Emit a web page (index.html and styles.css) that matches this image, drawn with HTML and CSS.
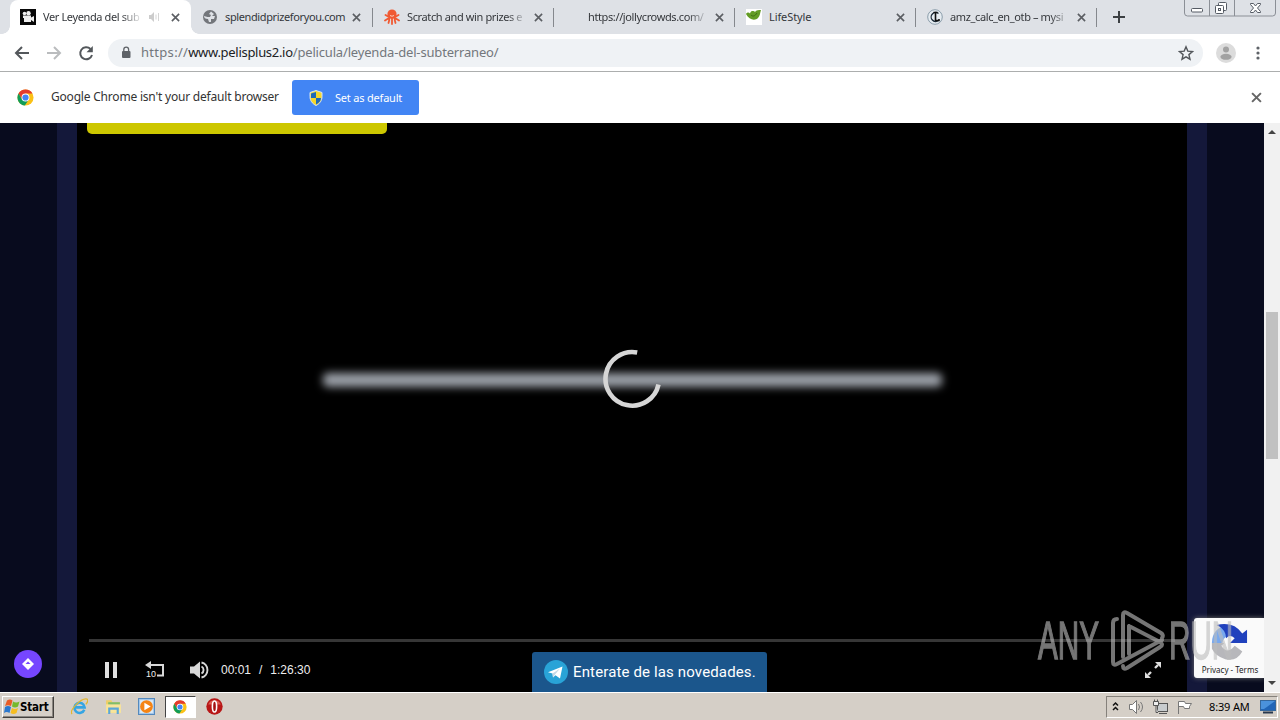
FILE: index.html
```
<!DOCTYPE html>
<html lang="es">
<head>
    <meta charset="UTF-8">
    <meta name="viewport" content="width=device-width, initial-scale=1.0">
    <title>Ver Leyenda del subterraneo</title>
    <link rel="stylesheet" href="styles.css">
</head>
<body>
    <svg width="0" height="0" class="defs">
        <symbol id="close" viewBox="0 0 10 10">
            <path d="M1 1l8 8M9 1l-8 8" fill="none" stroke="currentColor" stroke-width="1.8"/>
        </symbol>
        <symbol id="chrome" viewBox="0 0 18 18">
            <circle cx="9" cy="9" r="8.5" fill="#fbc116"/>
            <path d="M1.6 4.8A8.5 8.5 0 0 1 16.4 4.8H9L5.4 11z" fill="#e33b2e"/>
            <path d="M1.6 4.8A8.5 8.5 0 0 0 8.3 17.5L12.5 11 9 13 5.4 11z" fill="#109d58"/>
            <circle cx="9" cy="9" r="4.2" fill="#fff"/>
            <circle cx="9" cy="9" r="3.3" fill="#4285f4"/>
        </symbol>
    </svg>

    <div class="tab-strip">
        <div class="tab active">
            <svg class="favicon" viewBox="0 0 16 16">
                <rect width="16" height="16" fill="#080808"/>
                <circle cx="4.500" cy="4.500" r="1.800" fill="#eee"/><circle cx="8.500" cy="4.200" r="2.200" fill="#eee"/>
                <path d="M3 6.500h8v2l3-1.500v6l-3-2v2H4V9H3z" fill="#eee"/>
            </svg>
            <span class="tab-title">Ver Leyenda del sub</span>
            <svg class="audio" viewBox="0 0 12 10">
                <path d="M0 3h2l3-3v10L2 7H0z" fill="#ccc"/>
                <path d="M7 2.500v5M9.500 1v8" stroke="#d5d5d5" fill="none"/>
            </svg>
            <svg class="tab-close"><use href="#close"/></svg>
        </div>
        <div class="tab">
            <svg class="favicon" viewBox="0 0 16 16">
                <circle cx="8" cy="8" r="7" fill="#73767b"/>
                <path d="M9 2.500l-2 2.500 2 1-1 2H5.500L2 7q0 3 4 3l1 3 2 0 0-3 3 0 1-3-3 0 2-2z" fill="#dee1e6"/>
            </svg>
            <span class="tab-title full">splendidprizeforyou.com</span>
            <svg class="tab-close"><use href="#close"/></svg>
        </div>
        <div class="tab wide">
            <svg class="favicon" viewBox="0 0 16 16">
                <circle cx="8" cy="5" r="4.600" fill="#f05a33"/>
                <path d="M8 8v7M6 8l-1.500 6M10 8l1.500 6M5 8L1.500 6M11 8l3.500-2M5 9l-4 2.500M11 9l4 2.500" stroke="#f05a33" stroke-width="1.800" stroke-linecap="round"/>
                <path d="M6 6.500q2 1.500 4 0M6 11l1-1M10 11l-1-1" stroke="#fbd0c0" fill="none"/>
            </svg>
            <span class="tab-title">Scratch and win prizes e</span>
            <svg class="tab-close"><use href="#close"/></svg>
        </div>
        <div class="tab">
            <span class="favicon"></span>
            <span class="tab-title">https://jollycrowds.com/</span>
            <svg class="tab-close"><use href="#close"/></svg>
        </div>
        <div class="tab">
            <svg class="favicon" viewBox="0 0 16 16">
                <rect width="16" height="16" fill="#fff"/>
                <path d="M0 5c1-2 3-2 4-.5C5 1 8 2 9 3c1-2 4-2 6-2-1 3-1 6-3 8-3 3-9 2-12-4z" fill="#639c25"/>
                <path d="M5 6c2 2 4 1 6-2" stroke="#3c6f12" fill="none"/>
            </svg>
            <span class="tab-title full loose">LifeStyle</span>
            <svg class="tab-close"><use href="#close"/></svg>
        </div>
        <div class="tab">
            <svg class="favicon" viewBox="0 0 16 16">
                <circle cx="8" cy="8" r="7.300" fill="#e6ecf1" stroke="#8b9daa"/>
                <path d="M11.500 4.500A4.500 4.500 0 1 0 11.500 11.500" fill="none" stroke="#1c2b38" stroke-width="1.300"/>
                <path d="M6.500 3.500h4M8.500 3.500v8h3.500v-1.500" fill="none" stroke="#111" stroke-width="1.600"/>
            </svg>
            <span class="tab-title">amz_calc_en_otb – mysi</span>
            <svg class="tab-close"><use href="#close"/></svg>
        </div>
        <svg class="new-tab" viewBox="0 0 12 12"><path d="M6 0v12M0 6h12" stroke="#3c4043" stroke-width="2"/></svg>
        <svg class="window-buttons" viewBox="0 0 94 18">
            <path d="M1.500 0v13q0 3 3 3h85q3 0 3-3V0M26.500 0v16M51.500 0v16" fill="none" stroke="#8b8f96"/>
            <g fill="#fff" stroke="#555b64">
                <rect x="8.500" y="8.500" width="11" height="3.500" rx="1"/>
                <rect x="35.500" y="2.500" width="8" height="8" rx="1"/>
                <rect x="32.500" y="5.500" width="8" height="8" rx="1"/>
                <rect x="35.500" y="8.500" width="2" height="2"/>
                <path d="M67.500 3.500h3l2 2.500 2-2.500h3v1l-3 3.500 3 3.500v1h-3l-2-2.500-2 2.500h-3v-1l3-3.500-3-3.500z"/>
            </g>
        </svg>
    </div>

    <div class="toolbar">
        <svg class="nav-icons" viewBox="0 0 100 20">
            <path d="M21 10H8.500M14 4l-6 6 6 6" fill="none" stroke="#53575b" stroke-width="2"/>
            <path d="M39 10h13M46 4l6 6-6 6" fill="none" stroke="#babcbe" stroke-width="2"/>
            <path d="M82.500 6A6 6 0 1 0 84 12" fill="none" stroke="#53575b" stroke-width="2"/>
            <path d="M84.800 3v6.300h-6.300z" fill="#53575b"/>
        </svg>
        <div class="omnibox">
            <svg class="lock" viewBox="0 0 10 13">
                <rect x="1" y="5" width="8.500" height="7" rx="1" fill="#5f6368"/>
                <path d="M2.800 5V3.500a2.400 2.400 0 0 1 4.800 0V5" fill="none" stroke="#5f6368" stroke-width="1.300"/>
            </svg>
            <span class="url"><span class="scheme">https://</span><b>www.pelisplus2.io</b>/pelicula/leyenda-del-subterraneo/</span>
            <svg class="star" viewBox="0 0 16 16">
                <path d="M8 1.800l1.800 4.300 4.700.4-3.600 3.100 1.100 4.600L8 11.800l-4 2.400 1.100-4.600L1.500 6.500l4.700-.4z" fill="none" stroke="#53575b" stroke-width="1.400"/>
            </svg>
        </div>
        <svg class="avatar" viewBox="0 0 20 20">
            <circle cx="10" cy="10" r="10" fill="#dcdcdc"/>
            <circle cx="10" cy="6.500" r="3" fill="#a2a2a2"/>
            <ellipse cx="10" cy="13.800" rx="5.600" ry="3" fill="#a2a2a2"/>
        </svg>
        <svg class="menu" viewBox="0 0 4 14">
            <circle cx="2" cy="2" r="1.600"/><circle cx="2" cy="7" r="1.600"/><circle cx="2" cy="12" r="1.600"/>
        </svg>
    </div>

    <div class="infobar">
        <svg class="chrome-icon"><use href="#chrome"/></svg>
        <span class="info-text">Google Chrome isn't your default browser</span>
        <button class="default-btn">
            <svg viewBox="0 0 14 16">
                <path d="M7 .5l6 2v4c0 4-2 7-6 9-4-2-6-5-6-9v-4z" fill="#f5d72b" stroke="#d9e6f2"/>
                <path d="M7 2v6H2V3.500zM7 8h5c0 3-2 5-5 6.500z" fill="#1e69b8"/>
            </svg>
            <span>Set as default</span>
        </button>
        <svg class="info-close"><use href="#close"/></svg>
    </div>

    <div class="viewport">
        <div class="page">
            <div class="player">
                <div class="yellow-bar"></div>
                <div class="glow-line"></div>
                <svg class="spinner" viewBox="0 0 60 60">
                    <path d="M35.200 3.500A26.800 26.800 0 1 0 56.500 35.500" fill="none" stroke="#d6d6d6" stroke-width="4.600"/>
                </svg>
                <div class="controls">
                    <div class="progress"></div>
                    <div class="control-row">
                        <svg class="pause" viewBox="0 0 12 16"><path d="M0 0h4v16H0zM8 0h4v16H8z" fill="#e0e0e0"/></svg>
                        <div class="rewind">
                            <svg viewBox="0 0 20 17">
                                <path d="M3 4h15v10.500h-6" fill="none" stroke="#d8d8d8" stroke-width="2"/>
                                <path d="M0 4l6-4v8z" fill="#d8d8d8"/>
                            </svg>
                            <span>10</span>
                        </div>
                        <svg class="volume" viewBox="0 0 20 18">
                            <path d="M0 5.500h4l6-5v17l-6-5H0z" fill="#d8d8d8"/>
                            <path d="M11.500 5.500a4 4 0 0 1 0 7M11.500 1.500a7.700 7.700 0 0 1 0 15" fill="none" stroke="#d8d8d8" stroke-width="1.900"/>
                        </svg>
                        <span class="time">00:01</span><span class="slash">/</span><span class="total">1:26:30</span>
                        <svg class="fullscreen" viewBox="0 0 16 16">
                            <path d="M10 6l3-3M6 10l-3 3" stroke="#ddd" stroke-width="2.400"/>
                            <path d="M16 0v6l-6-6zM0 16v-6l6 6z" fill="#ddd"/>
                        </svg>
                    </div>
                </div>
            </div>
            <svg class="bubble" viewBox="0 0 28 28">
                <circle cx="14" cy="14" r="14" fill="#7646ff"/>
                <path d="M14 8l6 6-6 6-6-6z" fill="#fff"/>
                <path d="M14 11.500l2.500 2.500h-5z" fill="#7646ff"/>
            </svg>
            <div class="telegram">
                <svg viewBox="0 0 24 24">
                    <circle cx="12" cy="12" r="12" fill="#29a3d7"/>
                    <path d="M4 12.300L18.500 6.500 16 18.500l-4.500-3.200L9 17.500l-.5-4z" fill="#fff"/>
                    <path d="M8.500 13.500l7.500-5-5 6-2 3z" fill="#c5d9e6"/>
                </svg>
                <span>Enterate de las novedades.</span>
            </div>
            <div class="recaptcha">
                <svg viewBox="0 0 40 40">
                    <path d="M2 20Q2 4 19 1v12q-5 1-6 7z" fill="#78a8ee"/>
                    <path d="M7 1q18-4 27 9l5-4v14H21l5-5q-5-5-9 0Q17 6 7 1z" fill="#2041bd"/>
                    <path d="M2 20h13l-3 3q5 8 11 3l3-3 8 6Q28 40 16 37 6 34 2 26z" fill="#b7b7bb"/>
                </svg>
                <span>Privacy - Terms</span>
            </div>
            <div class="watermark">
                <span>ANY</span>
                <svg viewBox="0 0 56 64">
                    <g fill="none" stroke="currentColor" stroke-width="4" stroke-linejoin="round" stroke-linecap="round">
                        <path d="M7 10Q3 10 3 14V53q0 4 4 2L52 31"/>
                        <path d="M13 48V6q0-4 4-2l34 20q3 2 1 5"/>
                        <path d="M19 17v28M19 17l31 16q4 3 0 5L17 59q-4 2-4-2"/>
                    </g>
                </svg>
                <span>RUN</span>
            </div>
        </div>
        <div class="scrollbar">
            <span class="arrow up"></span>
            <span class="thumb"></span>
            <span class="arrow down"></span>
        </div>
    </div>

    <div class="taskbar">
        <div class="start">
            <svg viewBox="0 0 16 16">
                <path d="M3 1.500q3-2 5.500 0L7 7Q4 5.500 1 7z" fill="#e95c25"/>
                <path d="M9 2.500q3 2 6.500 0L14 7.500q-3 2-6 0z" fill="#75b92c"/>
                <path d="M1 8q3-2 6 0l-1.500 6q-3-2-5.500 0z" fill="#2b78ce"/>
                <path d="M8 9q3 2 6 0l-1.500 5q-3 2-6 0z" fill="#f6bd20"/>
            </svg>
            <span>Start</span>
        </div>
        <svg class="task-icon ie" viewBox="0 0 16 16">
            <path d="M12.500 11A4.800 4.800 0 1 1 12.800 8.800H4" fill="none" stroke="#35a5e3" stroke-width="2.400"/>
            <path d="M1 15C-2 12 9 0 15 1q2 1-1 5" fill="none" stroke="#e3b72d" stroke-width="1.200"/>
        </svg>
        <svg class="task-icon" viewBox="0 0 16 16">
            <path d="M1 2h5l1 2h7v10H1z" fill="#efcf67"/><path d="M3 4h11v3H3z" fill="#7fbd6b"/>
            <path d="M1 6h14v8H1z" fill="#f8e49a"/><path d="M4 15v-5h8v5" fill="none" stroke="#5ba7d8" stroke-width="2"/>
        </svg>
        <svg class="task-icon" viewBox="0 0 16 16">
            <rect x=".5" y=".5" width="15" height="15" fill="#a9cbed" stroke="#5489bd"/>
            <rect x="2" y="2" width="12" height="12" fill="#dcecf8"/>
            <circle cx="8" cy="8" r="6" fill="#f58414"/><path d="M6 4.500l6 3.500-6 3.500z" fill="#fff"/>
        </svg>
        <div class="task-active"><svg><use href="#chrome"/></svg></div>
        <svg class="task-icon" viewBox="0 0 16 16">
            <circle cx="8" cy="8" r="7.700" fill="#b81717"/><path d="M2 6a6.500 6.500 0 0 1 12 0z" fill="#dc5b50"/>
            <ellipse cx="8" cy="8" rx="2" ry="5.200" fill="#a51212" stroke="#fff" stroke-width="1.500"/>
        </svg>
        <div class="tray">
            <svg viewBox="0 0 82 16">
                <path d="M2 6.500l2.500-2.500L7 6.500M2 11l2.500-2.500L7 11" fill="none" stroke="#111" stroke-width="1.500"/>
                <path d="M18.500 5.500h3l4-4v13l-4-4h-3z" fill="#fff" stroke="#777"/>
                <path d="M27.500 5q2 3 0 6M29.500 3q4 5 0 10" fill="none" stroke="#777"/>
                <rect x="46.500" y="4.500" width="10" height="8" fill="#c8ccce" stroke="#555"/>
                <path d="M48 14.500h8" stroke="#555"/>
                <path d="M42.500 2.500h5v4h-5zM43.500 2.500v-2M46.500 2.500v-2M45 6.500v7h2" fill="#eee" stroke="#555"/>
                <path d="M67.500 15V2.500h6l1 2h6l-2 3 0 2h-5l-1-2h-5" fill="#fff" stroke="#777"/>
            </svg>
            <span class="clock">8:39 AM</span>
            <svg class="desktop" viewBox="0 0 16 14">
                <rect x=".5" y=".5" width="15" height="10" fill="#2165b7" stroke="#35679c"/>
                <path d="M1 1h14L4 9H1z" fill="#4b92dc"/><path d="M3 12.500h10" stroke="#28384e" stroke-width="2"/>
            </svg>
        </div>
    </div>
</body>
</html>
```
FILE: styles.css
```
:root {
    --strip: #dee1e6;
    --navy: #080b1e;
    --ui-font: "Noto Sans", "Open Sans", sans-serif;
}

* {
    margin: 0;
    padding: 0;
    box-sizing: border-box;
}

body {
    width: 1280px;
    height: 720px;
    overflow: hidden;
    display: flex;
    flex-direction: column;
    font-family: var(--ui-font);
    font-size: 11px;
    background: #fff;
}

svg {
    display: block;
    flex: none;
}

.defs {
    position: absolute;
}

/* Tabs */
.tab-strip {
    height: 34px;
    flex: none;
    background: var(--strip);
    display: flex;
    align-items: center;
    padding-left: 10px;
    position: relative;
}

.tab {
    width: 181px;
    height: 34px;
    flex: none;
    display: flex;
    align-items: center;
    padding: 0 11px;
    position: relative;
    color: #34373b;
}

.tab.wide {
    width: 182px;
    padding-left: 12px;
}

.tab:not(.active)::after {
    content: "";
    position: absolute;
    right: 0;
    top: 8px;
    width: 1px;
    height: 19px;
    background: #85888d;
}

.tab.active + .tab::after {
    right: -1px;
}

.tab.active {
    background: #fff;
    border-radius: 8px 8px 0 0;
    padding-left: 10px;
    z-index: 1;
}

.tab.active::before,
.tab.active::after {
    content: "";
    position: absolute;
    bottom: 0;
    width: 8px;
    height: 8px;
}

.tab.active::before {
    left: -8px;
    background: radial-gradient(circle at 0 0, var(--strip) 7.5px, #fff 8px);
}

.tab.active::after {
    right: -8px;
    background: radial-gradient(circle at 100% 0, var(--strip) 7.5px, #fff 8px);
}

.favicon {
    width: 16px;
    height: 16px;
    flex: none;
}

.tab-title {
    width: 119px;
    margin-left: 7px;
    white-space: nowrap;
    line-height: 18px;
    letter-spacing: -0.38px;
    mask-image: linear-gradient(to right, #000 100px, transparent 121px);
}

.active .tab-title {
    width: 97px;
    mask-image: linear-gradient(to right, #000 78px, transparent 100px);
}

.tab-title.full {
    mask-image: none;
}

.tab-title.loose {
    letter-spacing: -0.1px;
}

.audio {
    width: 12px;
    height: 10px;
    margin-left: 9px;
}

.tab-close {
    width: 9px;
    height: 9px;
    color: #5b5e63;
    margin-left: auto;
}

.new-tab {
    width: 12px;
    height: 12px;
    margin-left: 16px;
}

.window-buttons {
    width: 94px;
    height: 18px;
    position: absolute;
    top: 0;
    right: 3px;
}

/* Address bar */
.toolbar {
    height: 38px;
    flex: none;
    display: flex;
    align-items: center;
    border-bottom: 1px solid #acaeae;
    padding: 0 20px 0 8px;
}

.nav-icons {
    width: 100px;
    height: 20px;
}

.omnibox {
    width: 1095px;
    height: 28px;
    border-radius: 14px;
    background: #eff2f5;
    display: flex;
    align-items: center;
    padding: 0 9px 0 13px;
}

.lock {
    width: 10px;
    height: 13px;
}

.url {
    font-size: 13px;
    line-height: 20px;
    color: #73777c;
    margin: -2px 0 0 10px;
    letter-spacing: -0.17px;
    white-space: nowrap;
}

.scheme {
    letter-spacing: 0.3px;
}

.url b {
    font-weight: 400;
    color: #202124;
    letter-spacing: -0.3px;
}

.star {
    width: 16px;
    height: 16px;
    margin-left: auto;
}

.avatar {
    width: 20px;
    height: 20px;
    margin-left: 13px;
}

.menu {
    width: 4px;
    height: 14px;
    margin-left: auto;
    fill: #5f6368;
}

/* Default browser prompt */
.infobar {
    height: 51px;
    flex: none;
    display: flex;
    align-items: center;
    padding: 0 18px 0 17px;
    color: #333;
}

.chrome-icon {
    width: 17px;
    height: 17px;
}

.info-text {
    width: 241px;
    margin: -2px 0 0 17px;
    font-size: 12px;
    letter-spacing: -0.2px;
    white-space: nowrap;
}

.default-btn {
    width: 127px;
    height: 35px;
    border: 0;
    border-radius: 3px;
    background: #4285f4;
    color: #fff;
    font: 11px var(--ui-font);
    letter-spacing: -0.2px;
    display: flex;
    align-items: center;
    padding-left: 17px;
    gap: 12px;
    white-space: nowrap;
}

.default-btn svg {
    width: 14px;
    height: 16px;
}

.info-close {
    width: 11px;
    height: 11px;
    color: #666;
    margin-left: auto;
}

/* Page */
.viewport {
    height: 569px;
    flex: none;
    display: flex;
}

.page {
    width: 1264px;
    height: 569px;
    padding: 0 57px;
    background: var(--navy);
    position: relative;
    overflow: hidden;
}

.player {
    height: 569px;
    border: solid #14183a;
    border-width: 0 20px;
    background: #000;
    position: relative;
    display: flex;
    flex-direction: column;
    justify-content: space-between;
}

.yellow-bar {
    width: 300px;
    height: 11px;
    margin-left: 10px;
    border-radius: 0 0 5px 5px;
    background: #cdc700;
}

.glow-line {
    position: absolute;
    left: 246px;
    top: 250px;
    width: 619px;
    height: 14px;
    background: #9ba0a8;
    border-radius: 5px;
    filter: blur(4px);
}

.spinner {
    position: absolute;
    left: 525px;
    top: 226px;
    width: 60px;
    height: 60px;
}

.controls {
    height: 53px;
    padding: 0 12px;
}

.progress {
    height: 3px;
    background: #363636;
}

.control-row {
    display: flex;
    align-items: center;
    height: 55px;
    padding-left: 16px;
    color: #eee;
    font: 12px "Liberation Sans", sans-serif;
}

.pause {
    width: 12px;
    height: 16px;
}

.rewind {
    width: 20px;
    height: 17px;
    margin-left: 28px;
    position: relative;
}

.rewind svg {
    width: 20px;
    height: 17px;
}

.rewind span {
    position: absolute;
    left: 1px;
    top: 8px;
    font-size: 9px;
    line-height: 10px;
}

.volume {
    width: 20px;
    height: 18px;
    margin-left: 25px;
}

.time {
    width: 38px;
    margin-left: 11px;
}

.total {
    margin-left: 8px;
}

.fullscreen {
    width: 16px;
    height: 16px;
    margin-left: auto;
    margin-right: 14px;
}

.bubble {
    position: absolute;
    left: 14px;
    top: 527px;
    width: 28px;
    height: 28px;
}

.telegram {
    position: absolute;
    left: 532px;
    bottom: 0;
    width: 235px;
    height: 40px;
    border-radius: 3px 3px 0 0;
    background: #1b568c;
    color: #fff;
    display: flex;
    align-items: center;
    padding-left: 12px;
    gap: 5px;
    font: 15px Roboto, sans-serif;
    letter-spacing: 0.14px;
    white-space: nowrap;
}

.telegram svg {
    width: 24px;
    height: 24px;
}

.recaptcha {
    position: absolute;
    right: 0;
    top: 495px;
    width: 70px;
    height: 60px;
    border-radius: 3px 0 0 3px;
    background: #fafafa;
    box-shadow: 0 0 5px #777;
    display: flex;
    flex-direction: column;
    align-items: center;
    font: 8px "Noto Sans", sans-serif;
    color: #222;
}

.recaptcha svg {
    width: 38px;
    height: 38px;
    margin-top: 6px;
}

.recaptcha span {
    line-height: 12px;
    margin-top: 2px;
    margin-left: 2px;
    white-space: nowrap;
}

.watermark {
    position: absolute;
    left: 1038px;
    top: 486px;
    width: 200px;
    height: 64px;
    display: flex;
    align-items: center;
    color: #bdbdbd;
    opacity: 0.62;
    font: 53px/40px "Liberation Sans", sans-serif;
}

.watermark span {
    transform: scaleX(0.56);
    transform-origin: left center;
    width: 72px;
    flex: none;
    white-space: nowrap;
    -webkit-text-stroke: 1.5px #bdbdbd;
}

.watermark svg {
    width: 56px;
    height: 64px;
    margin-right: 3px;
}

.scrollbar {
    width: 16px;
    background: #f1f1f1;
    display: flex;
    flex-direction: column;
    align-items: center;
    padding: 7px 0;
}

.arrow {
    border: 4px solid transparent;
}

.up {
    border-top-width: 0;
    border-bottom-color: #444;
}

.down {
    border-bottom-width: 0;
    border-top-color: #444;
    margin-top: auto;
}

.thumb {
    width: 12px;
    height: 147px;
    margin-top: 178px;
    background: #c1c1c1;
}

/* Taskbar */
.taskbar {
    height: 28px;
    flex: none;
    background: #d5cfc7;
    border-top: 1px solid #fff;
    display: flex;
    align-items: center;
    padding: 0 2px;
}

.start {
    width: 52px;
    height: 22px;
    border: 1px solid;
    border-color: #fff #45423e #45423e #fff;
    box-shadow: inset -1px -1px #8b8781;
    display: flex;
    align-items: center;
    padding-left: 1px;
    font: bold 11.5px "DejaVu Sans Condensed", "DejaVu Sans", sans-serif;
    letter-spacing: -0.2px;
}

.start svg {
    width: 16px;
    height: 16px;
}

.task-icon {
    width: 17px;
    height: 17px;
    margin-left: 17px;
}

.task-icon.ie + .task-icon,
.task-icon + .task-icon {
    margin-left: 16.5px;
}

.task-active {
    width: 31px;
    height: 22px;
    margin-left: 9.5px;
    border: 1px solid;
    border-color: #444 #fff #fff #444;
    background: #fff;
    display: flex;
    align-items: center;
    justify-content: center;
}

.task-active svg {
    width: 14px;
    height: 14px;
}

.task-active + .task-icon {
    margin-left: 10px;
}

.tray {
    width: 172px;
    height: 22px;
    margin-left: auto;
    border: 1px solid;
    border-color: #85817b #fff #fff #85817b;
    display: flex;
    align-items: center;
    padding-left: 4px;
    font: 11px var(--ui-font);
    letter-spacing: -0.15px;
}

.tray svg {
    width: 82px;
    height: 16px;
}

.clock {
    width: 41px;
    margin-left: 16px;
    white-space: nowrap;
}

.tray .desktop {
    width: 16px;
    height: 14px;
    margin-left: 10px;
}
```
